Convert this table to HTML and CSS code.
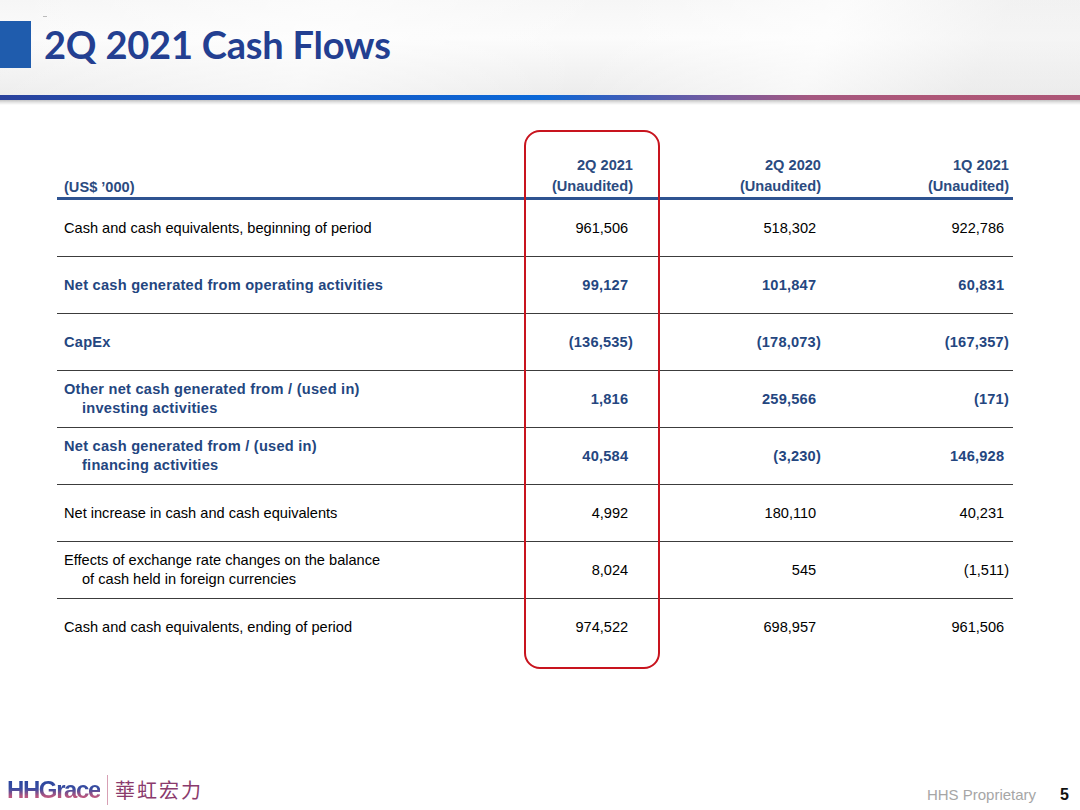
FILE: index.html
```html
<!DOCTYPE html>
<html lang="en">
<head>
<meta charset="utf-8">
<title>2Q 2021 Cash Flows</title>
<link rel="stylesheet" href="styles.css">
</head>
<body>
<div class="slide">
  <header class="top">
    <div class="title-row">
      <span class="square"></span>
      <h1 class="title">2Q 2021 Cash Flows</h1>
    </div>
    <span class="tick"></span>
  </header>
  <div class="bar"></div>
  <div class="bar-shadow"></div>

  <main class="content">
    <div class="table">
      <div class="highlight"></div>
      <div class="row head">
        <div class="cell label">(US$ ’000)</div>
        <div class="cell num c1">2Q 2021<br>(Unaudited)</div>
        <div class="cell num c2">2Q 2020<br>(Unaudited)</div>
        <div class="cell num c3">1Q 2021<br>(Unaudited)</div>
      </div>
      <div class="row">
        <div class="cell label">Cash and cash equivalents, beginning of period</div>
        <div class="cell num c1"><span class="pos">961,506</span></div>
        <div class="cell num c2"><span class="pos">518,302</span></div>
        <div class="cell num c3"><span class="pos">922,786</span></div>
      </div>
      <div class="row blue">
        <div class="cell label">Net cash generated from operating activities</div>
        <div class="cell num c1"><span class="pos">99,127</span></div>
        <div class="cell num c2"><span class="pos">101,847</span></div>
        <div class="cell num c3"><span class="pos">60,831</span></div>
      </div>
      <div class="row blue">
        <div class="cell label">CapEx</div>
        <div class="cell num c1">(136,535)</div>
        <div class="cell num c2">(178,073)</div>
        <div class="cell num c3">(167,357)</div>
      </div>
      <div class="row blue">
        <div class="cell label">Other net cash generated from / (used in)<br><span class="indent">investing activities</span></div>
        <div class="cell num c1"><span class="pos">1,816</span></div>
        <div class="cell num c2"><span class="pos">259,566</span></div>
        <div class="cell num c3">(171)</div>
      </div>
      <div class="row blue">
        <div class="cell label">Net cash generated from / (used in)<br><span class="indent">financing activities</span></div>
        <div class="cell num c1"><span class="pos">40,584</span></div>
        <div class="cell num c2">(3,230)</div>
        <div class="cell num c3"><span class="pos">146,928</span></div>
      </div>
      <div class="row">
        <div class="cell label">Net increase in cash and cash equivalents</div>
        <div class="cell num c1"><span class="pos">4,992</span></div>
        <div class="cell num c2"><span class="pos">180,110</span></div>
        <div class="cell num c3"><span class="pos">40,231</span></div>
      </div>
      <div class="row">
        <div class="cell label">Effects of exchange rate changes on the balance<br><span class="indent">of cash held in foreign currencies</span></div>
        <div class="cell num c1"><span class="pos">8,024</span></div>
        <div class="cell num c2"><span class="pos">545</span></div>
        <div class="cell num c3">(1,511)</div>
      </div>
      <div class="row last">
        <div class="cell label">Cash and cash equivalents, ending of period</div>
        <div class="cell num c1"><span class="pos">974,522</span></div>
        <div class="cell num c2"><span class="pos">698,957</span></div>
        <div class="cell num c3"><span class="pos">961,506</span></div>
      </div>
    </div>
  </main>

  <footer class="footer">
    <div class="logo">
      <span class="logo-en">HHGrace</span>
      <span class="logo-sep"></span>
      <span class="logo-cn">華虹宏力</span>
    </div>
    <div class="foot-right">
      <span class="prop">HHS Proprietary</span>
      <span class="page">5</span>
    </div>
  </footer>
</div>
</body>
</html>
```

FILE: styles.css
```css
* { box-sizing: border-box; }
html, body { margin: 0; padding: 0; background: #ffffff; }
body { font-family: "Liberation Sans", Arial, sans-serif; }

.slide {
  width: 1080px;
  height: 810px;
  overflow: hidden;
  position: relative;
  display: flex;
  flex-direction: column;
  background: #ffffff;
}

/* ---------- header ---------- */
.top {
  height: 95px;
  position: relative;
  background:
    linear-gradient(115deg, rgba(255,255,255,0) 0%, rgba(255,255,255,0.55) 30%, rgba(255,255,255,0) 55%, rgba(255,255,255,0.6) 75%, rgba(235,235,235,0.4) 90%),
    linear-gradient(180deg, #f6f6f6 0%, #fbfbfb 40%, #ececec 100%);
  padding-top: 21px;
}
.title-row {
  display: flex;
  align-items: flex-start;
  gap: 13px;
}
.square {
  width: 31px;
  height: 47px;
  background: #1f5cad;
  flex: none;
}
.title {
  margin: 0;
  font-family: Lato, "Open Sans", sans-serif;
  font-weight: 700;
  font-size: 38px;
  line-height: 47px;
  color: #233f91;
  letter-spacing: -0.2px;
}
.tick {
  position: absolute;
  left: 43px;
  top: 16px;
  width: 4px;
  height: 1px;
  background: #bbbbbb;
}
.bar {
  height: 5px;
  background: linear-gradient(90deg, #2a429c 0%, #1856c0 25%, #0a68d8 50%, #3e5db8 58%, #7a5a9c 67%, #a45880 75%, #ae5778 85%, #ad5677 100%);
}
.bar-shadow {
  height: 5px;
  background: linear-gradient(180deg, #c4c4c4 0%, #e6e6e6 50%, #ffffff 100%);
}

/* ---------- table ---------- */
.content {
  flex: 1;
  padding: 45px 0 0 57px;
}
.table {
  position: relative;
  width: 956px;
  display: flex;
  flex-direction: column;
}
.highlight {
  position: absolute;
  left: 467px;
  top: -20px;
  width: 136px;
  height: 539px;
  border: 2.5px solid #c8141e;
  border-radius: 16px;
  pointer-events: none;
}
.row {
  display: grid;
  grid-template-columns: 467px 136px 188px 165px;
  height: 57px;
  border-bottom: 1.6px solid #3c3c3c;
  font-size: 14.6px;
  color: #000000;
}
.row.last { border-bottom: none; }
.row.head {
  height: 50px;
  border-bottom: 3px solid #2e5391;
  color: #2b4b80;
  font-weight: 700;
}
.row.blue {
  color: #24467f;
  font-weight: 700;
  letter-spacing: 0.25px;
}
.cell {
  display: flex;
  align-items: center;
  line-height: 19px;
}
.head .cell {
  align-items: flex-end;
  line-height: 21px;
  padding-bottom: 0;
}
.cell.label {
  padding-left: 7px;
  display: block;
  align-self: center;
}
.head .cell.label { align-self: end; line-height: 19px; padding-bottom: 0; }
.indent { padding-left: 18px; }
.cell.num {
  justify-content: flex-end;
  text-align: right;
}
.c1 { padding-right: 27px; }
.c2 { padding-right: 27px; }
.c3 { padding-right: 4px; }
.pos { padding-right: 4.8px; }
.row.blue .cell.num { letter-spacing: 0.2px; }

/* ---------- footer ---------- */
.footer {
  height: 40px;
  display: flex;
  justify-content: space-between;
  align-items: center;
  padding: 0 11px 0 7px;
}
.logo {
  display: flex;
  align-items: center;
  gap: 7px;
  height: 32px;
}
.logo-en {
  font-family: "Liberation Sans", Arial, sans-serif;
  font-weight: 700;
  font-size: 24px;
  letter-spacing: -1.4px;
  line-height: 24px;
  background: linear-gradient(180deg, #24449e 0%, #3a4ca0 45%, #b4557f 75%, #d05a86 100%);
  -webkit-background-clip: text;
  background-clip: text;
  color: transparent;
}
.logo-sep {
  width: 1px;
  height: 30px;
  background: #d7a0b4;
}
.logo-cn {
  font-family: "Noto Sans CJK TC", "Noto Sans CJK SC", sans-serif;
  font-size: 20px;
  font-weight: 400;
  letter-spacing: 2px;
  color: #8a3a6c;
  line-height: 22px;
}
.foot-right {
  display: flex;
  align-items: baseline;
  gap: 24px;
  padding-top: 9px;
}
.prop {
  font-size: 15px;
  color: #a6a6a6;
}
.page {
  font-size: 16px;
  font-weight: 700;
  color: #111111;
}
```
